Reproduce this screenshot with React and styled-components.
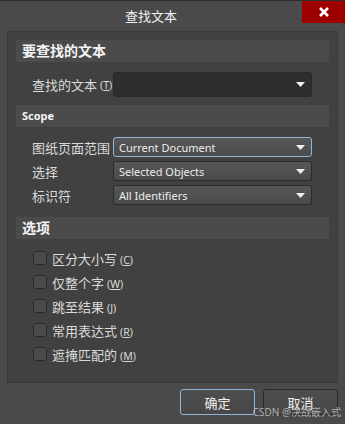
import React from "react";
import styled, { createGlobalStyle } from "styled-components";

const Global = createGlobalStyle`
  html, body { margin: 0; padding: 0; background: #4a4a4a; }
  body { font-family: "Noto Sans", "Noto Sans CJK SC", sans-serif; }
`;

const Dialog = styled.div`
  width: 345px;
  height: 424px;
  background: #4a4a4a;
  border-top: 1px solid #2e2e2e;
  box-sizing: border-box;
  display: flex;
  flex-direction: column;
  position: relative;
  overflow: hidden;
`;

const TitleBar = styled.div`
  height: 30px;
  display: flex;
  align-items: flex-start;
`;

const Title = styled.div`
  flex: 1;
  text-align: center;
  color: #f2f2f2;
  font-size: 13px;
  line-height: 29px;
  font-family: "Noto Sans CJK SC", sans-serif;
`;

const Close = styled.div`
  width: 43px;
  height: 22px;
  background: #9e0000;
  display: flex;
  align-items: center;
  justify-content: center;
`;

const Panel = styled.div`
  margin: 0 7px;
  height: 352px;
  background: #414141;
  border: 1px solid #3a3a3a;
  box-sizing: border-box;
  padding: 8px 8px 0 8px;
  display: flex;
  flex-direction: column;
`;

const Header = styled.div`
  height: 22px;
  background: #4b4b4b;
  color: #f4f4f4;
  font-weight: bold;
  font-size: ${(p) => p.$size || 14}px;
  line-height: 22px;
  padding-left: 6px;
  font-family: "Noto Sans", "Noto Sans CJK SC", sans-serif;
`;

const Rows = styled.div`
  display: flex;
  flex-direction: column;
  gap: ${(p) => p.$gap || 4}px;
  padding: ${(p) => p.$pad || "10px 17px 10px 16px"};
`;

const Row = styled.div`
  display: flex;
  align-items: center;
  height: ${(p) => p.$h || 20}px;
`;

const Label = styled.div`
  width: 81px;
  flex: none;
  color: #dadada;
  font-size: 13px;
  font-family: "Noto Sans CJK SC", sans-serif;
  white-space: nowrap;
  display: flex;
  align-items: center;
`;

const Key = styled.span`
  font-size: 10.5px;
  margin-left: 3px;
  font-family: "Noto Sans", sans-serif;
  color: #dadada;
  & u { text-decoration: underline; }
`;

const Select = styled.div`
  flex: 1;
  height: ${(p) => p.$h || 20}px;
  box-sizing: border-box;
  border-radius: 3px;
  border: 1px solid ${(p) => (p.$focus ? "#8db6da" : "#2a2a2a")};
  background: ${(p) =>
    p.$dark ? "#2e2e2e" : "linear-gradient(#575757, #4b4b4b)"};
  display: flex;
  align-items: center;
  justify-content: space-between;
  padding: 0 6px 0 5px;
  color: #ececec;
  font-size: 11px;
  font-family: "Noto Sans", sans-serif;
`;

const Arrow = () => (
  <svg width="9" height="5" viewBox="0 0 9 5">
    <path d="M0 0 H9 L4.5 5 Z" fill="#f2f2f2" />
  </svg>
);

const CheckRow = styled.label`
  display: flex;
  align-items: center;
  height: 16px;
  gap: 5px;
  color: #dadada;
  font-size: 13px;
  font-family: "Noto Sans CJK SC", sans-serif;
`;

const Box = styled.span`
  width: 14px;
  height: 14px;
  box-sizing: border-box;
  border: 1px solid #2a2a2a;
  border-radius: 3px;
  background: #4a4a4a;
  flex: none;
`;

const Footer = styled.div`
  display: flex;
  justify-content: flex-end;
  gap: 8px;
  padding: 6px 7px 0 0;
`;

const Button = styled.div`
  width: 75px;
  height: 26px;
  box-sizing: border-box;
  border-radius: 3px;
  border: 1px solid ${(p) => (p.$primary ? "#8db6da" : "#2a2a2a")};
  background: linear-gradient(#4e4e4e, #474747);
  color: #f0f0f0;
  font-size: 13px;
  font-family: "Noto Sans CJK SC", sans-serif;
  display: flex;
  align-items: center;
  justify-content: center;
`;

const Watermark = styled.div`
  position: absolute;
  right: 4px;
  bottom: 5px;
  font-size: 10px;
  color: rgba(210, 210, 210, 0.75);
  font-family: "Noto Sans", "Noto Sans CJK SC", sans-serif;
`;

const options = [
  ["区分大小写", "C"],
  ["仅整个字", "W"],
  ["跳至结果", "J"],
  ["常用表达式", "R"],
  ["遮掩匹配的", "M"],
];

export default function App() {
  return (
    <>
      <Global />
      <Dialog>
        <TitleBar>
          <Title>查找文本</Title>
          <Close>
            <svg width="10" height="10" viewBox="0 0 10 10">
              <path d="M1 1 L9 9 M9 1 L1 9" stroke="#fff" strokeWidth="2.6" />
            </svg>
          </Close>
        </TitleBar>
        <Panel>
          <Header>要查找的文本</Header>
          <Rows $pad="10px 17px 8px 16px">
            <Row $h={25}>
              <Label>
                查找的文本<Key>(<u>T</u>)</Key>
              </Label>
              <Select $dark $h={25}>
                <span />
                <Arrow />
              </Select>
            </Row>
          </Rows>
          <Header $size={11}>Scope</Header>
          <Rows $gap={4} $pad="10px 17px 12px 16px">
            <Row>
              <Label>图纸页面范围</Label>
              <Select $focus>
                Current Document
                <Arrow />
              </Select>
            </Row>
            <Row>
              <Label>选择</Label>
              <Select>
                Selected Objects
                <Arrow />
              </Select>
            </Row>
            <Row>
              <Label>标识符</Label>
              <Select>
                All Identifiers
                <Arrow />
              </Select>
            </Row>
          </Rows>
          <Header>选项</Header>
          <Rows $gap={8} $pad="11px 0 0 17px">
            {options.map(([t, k]) => (
              <CheckRow key={k}>
                <Box />
                <span>
                  {t}
                  <Key>
                    (<u>{k}</u>)
                  </Key>
                </span>
              </CheckRow>
            ))}
          </Rows>
        </Panel>
        <Footer>
          <Button $primary>确定</Button>
          <Button>取消</Button>
        </Footer>
        <Watermark>CSDN @决战嵌入式</Watermark>
      </Dialog>
    </>
  );
}
